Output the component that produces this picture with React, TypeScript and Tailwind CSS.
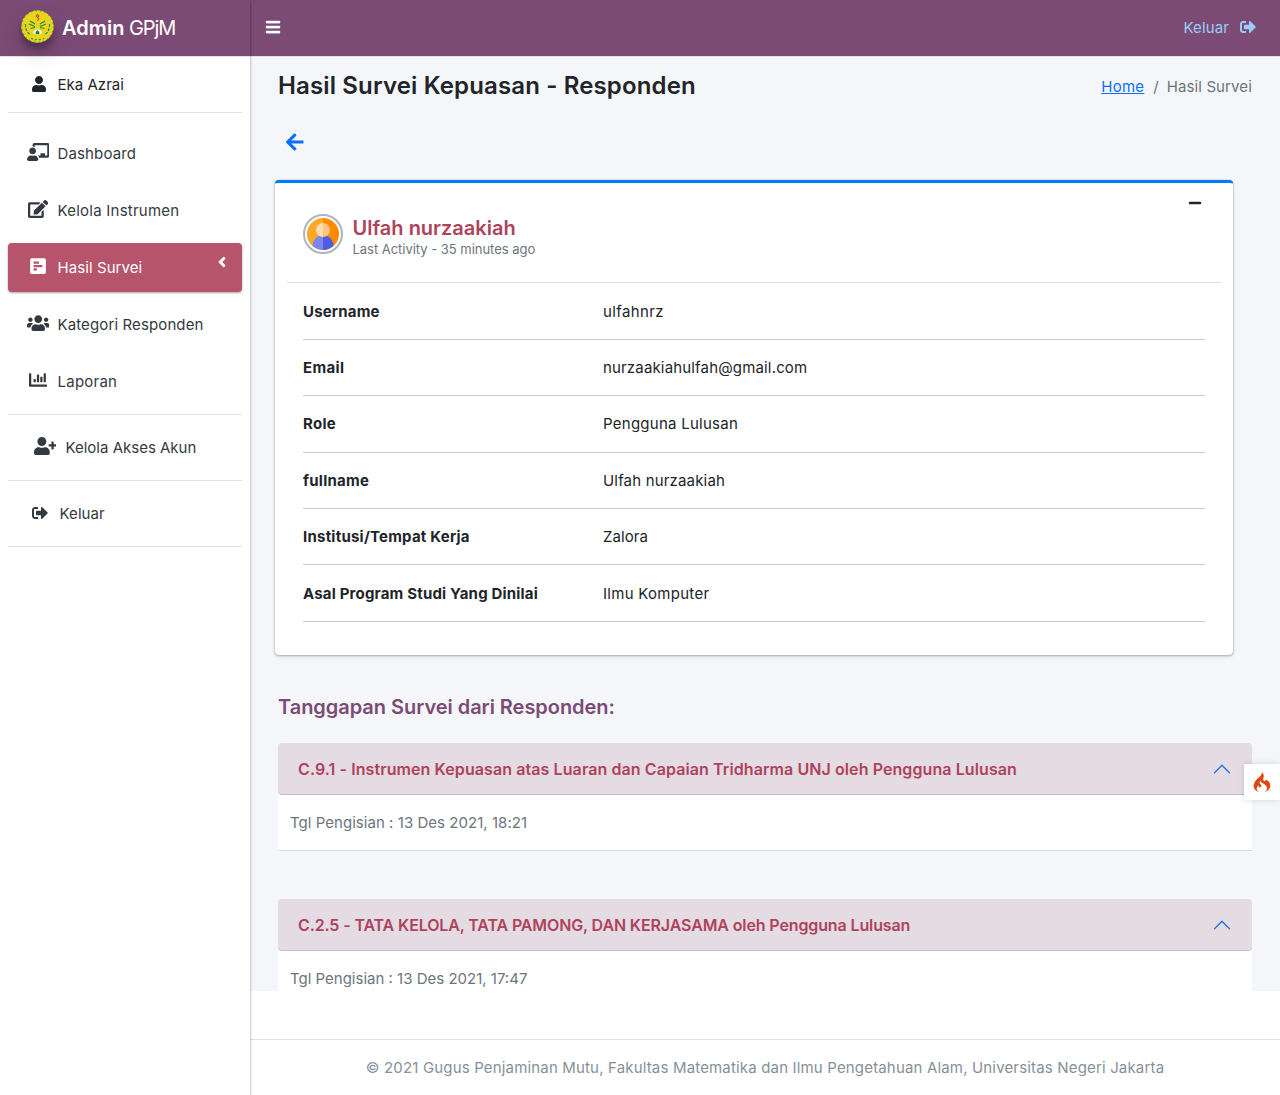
import type { ReactNode } from "react";
import {
  FaAngleLeft,
  FaArrowLeft,
  FaBars,
  FaChalkboardTeacher,
  FaChartBar,
  FaEdit,
  FaMinus,
  FaPollH,
  FaSignOutAlt,
  FaUser,
  FaUserPlus,
  FaUsers,
} from "react-icons/fa";
import { SiCodeigniter } from "react-icons/si";
import { BsChevronUp } from "react-icons/bs";

function Logo() {
  return (
    <svg viewBox="0 0 33 33" className="size-[33px] rounded-full shadow-[0_10px_20px_rgba(0,0,0,0.19),0_6px_6px_rgba(0,0,0,0.23)]">
      <circle cx="16.5" cy="16.5" r="16.3" fill="#e6d51c" />
      <circle cx="16.5" cy="16.5" r="15.8" fill="none" stroke="#2c8a3c" strokeWidth="1" strokeDasharray="1.5 3" />
      <g fill="none" stroke="#1f8a45" strokeWidth="1.2">
        <path d="M9 11l5 3M24 11l-5 3M8 14l6 2.5M25 14l-6 2.5M9.500 18.500l4.500-1M23.500 18.500l-4.500-1" />
        <path d="M4.500 14q-.5 7 5 11M28.500 14q.5 7-5 11" strokeDasharray="3 1.200" />
        <path d="M10 28.500q6.500 2.500 13 0" strokeDasharray="2 2" />
      </g>
      <path d="M12.500 24v-2.500l2-2h4l2 2V24z" fill="#f5f5ea" />
      <path d="M14.700 24v-2.300l1.800-1.500 1.800 1.500V24z" fill="#16804a" />
      <path d="M16.500 4.500l1.300 1.500-1.300 1.500-1.300-1.500zM16.500 7.500l1.300 1.500-1.300 1.800" fill="none" stroke="#dc3b1e" strokeWidth="1.100" />
    </svg>
  );
}

function Avatar() {
  return (
    <div className="size-10 shrink-0 rounded-full border-2 border-[#adb5bd] bg-white p-[2px]">
      <svg viewBox="0 0 32 32" className="size-8">
        <defs>
          <clipPath id="avatar-circle">
            <circle cx="16" cy="16" r="16" />
          </clipPath>
        </defs>
        <g clipPath="url(#avatar-circle)">
          <path d="M0 0h16v32H0z" fill="#ffa726" />
          <path d="M16 0h16v32H16z" fill="#ff8a00" />
          <path d="M16 17.500c-6.500 0-10.500 4.500-10.500 11V32H16z" fill="#7c86ec" />
          <path d="M16 17.500c6.500 0 10.500 4.500 10.500 11V32H16z" fill="#4d5ce6" />
          <path d="M16 5a7 7 0 0 0 0 14z" fill="#ffdcae" />
          <path d="M16 5a7 7 0 0 1 0 14z" fill="#ffc47d" />
        </g>
      </svg>
    </div>
  );
}

type NavRowProps = {
  icon: ReactNode;
  label: string;
  labelClass: string;
  active?: boolean;
};

function NavRow({ icon, label, labelClass, active = false }: NavRowProps) {
  return (
    <a
      className={
        active
          ? "flex h-[49px] items-center rounded bg-[#b5546b] pl-[15px] text-white shadow-[0_1px_3px_rgba(0,0,0,0.12),0_1px_2px_rgba(0,0,0,0.24)]"
          : "flex h-[49px] items-center pl-[15px] text-[#343a40]"
      }
    >
      <span className="-mt-[2.5px] -ml-[0.5px] flex w-[30.5px] justify-center">{icon}</span>
      <span className={labelClass}>{label}</span>
      {active && <FaAngleLeft className="-mt-[11px] mr-[12px] ml-auto size-4 stroke-white" strokeWidth={16} />}
    </a>
  );
}

const details = [
  { name: "Username", nameClass: "tracking-[0.18px]", value: "ulfahnrz", valueClass: "tracking-[0.38px]" },
  { name: "Email", nameClass: "tracking-[0.35px]", value: "nurzaakiahulfah@gmail.com", valueClass: "tracking-[0.16px]" },
  { name: "Role", nameClass: "tracking-[0.3px]", value: "Pengguna Lulusan", valueClass: "tracking-[0.26px]" },
  { name: "fullname", nameClass: "tracking-[0.26px]", value: "Ulfah nurzaakiah", valueClass: "tracking-[0.17px]" },
  { name: "Institusi/Tempat Kerja", nameClass: "tracking-[0.23px]", value: "Zalora", valueClass: "tracking-[0.08px]" },
  { name: "Asal Program Studi Yang Dinilai", nameClass: "tracking-[0.19px]", value: "Ilmu Komputer", valueClass: "tracking-[0.28px]" },
];

const responses = [
  {
    title: "C.9.1 - Instrumen Kepuasan atas Luaran dan Capaian Tridharma UNJ oleh Pengguna Lulusan",
    titleClass: "tracking-[0.09px]",
    date: "Tgl Pengisian : 13 Des 2021, 18:21",
    dateClass: "tracking-[0.04px]",
  },
  {
    title: "C.2.5 - TATA KELOLA, TATA PAMONG, DAN KERJASAMA oleh Pengguna Lulusan",
    titleClass: "tracking-[-0.125px]",
    date: "Tgl Pengisian : 13 Des 2021, 17:47",
    dateClass: "tracking-[0px]",
  },
];

function Sidebar() {
  return (
    <aside className="z-10 flex w-[250px] shrink-0 flex-col bg-white shadow-[0_1px_3px_rgba(0,0,0,0.25),0_1px_2px_rgba(0,0,0,0.22)]">
      <div className="flex h-[57px] shrink-0 items-start border-b border-[#dee2e6] bg-[#7b4b75] pt-[10px] pl-[21px] text-white">
        <Logo />
        <div className="mt-[3px] ml-2 flex text-[20px] leading-[30px]">
          <span className="font-semibold tracking-[0.05px]">Admin</span>
          <span className="ml-[4.5px] tracking-[-1.05px]">GPjM</span>
        </div>
      </div>
      <div className="px-2">
        <div className="flex h-14 items-center border-b border-[#dee2e6] pl-[15px] text-[#212529]">
          <span className="-mt-[2px] flex w-[31px] justify-center pl-px">
            <FaUser className="size-4" />
          </span>
          <span className="ml-[3.5px] tracking-[0.02px]">Eka Azrai</span>
        </div>
        <nav className="mt-4 flex flex-col gap-2">
          <NavRow icon={<FaChalkboardTeacher className="h-[18px] w-[22.5px]" />} label="Dashboard" labelClass="ml-[4.5px] tracking-[0.14px]" />
          <NavRow icon={<FaEdit className="h-[18px] w-[20.250px]" />} label="Kelola Instrumen" labelClass="ml-[4.5px] tracking-[0.24px]" />
          <NavRow active icon={<FaPollH className="h-[18px] w-[16px]" />} label="Hasil Survei" labelClass="ml-[4.5px] tracking-[0.08px]" />
          <NavRow icon={<FaUsers className="h-[18px] w-[22.5px]" />} label="Kategori Responden" labelClass="ml-[4.5px] tracking-[0.12px]" />
          <NavRow icon={<FaChartBar className="size-[18px]" />} label="Laporan" labelClass="ml-[4.5px] tracking-[0.24px]" />
        </nav>
        <div className="mt-2 border-y border-[#dee2e6] py-2 pl-2">
          <NavRow icon={<FaUserPlus className="h-[18px] w-[22.5px] translate-x-[-1px]" />} label="Kelola Akses Akun" labelClass="ml-[4.5px] tracking-[0px]" />
        </div>
        <div className="border-b border-[#dee2e6] py-2 pl-[2px]">
          <NavRow icon={<FaSignOutAlt className="mt-px size-4" />} label="Keluar" labelClass="ml-[4.5px] tracking-[0.08px]" />
        </div>
      </div>
    </aside>
  );
}

export default function App() {
  return (
    <div className="relative flex h-[1095px] w-[1280px] overflow-hidden bg-white font-[Inter,sans-serif] text-[15px] leading-[24px] text-[#212529]">
      <Sidebar />
      <div className="flex min-w-0 flex-1 flex-col">
        <header className="flex h-[57px] shrink-0 items-center justify-between border-b border-[#dee2e6] bg-[#7b4b75] pr-6 pb-px pl-[15px]">
          <FaBars className="mb-px size-4 stroke-white text-white" strokeWidth={12} />
          <a className="flex items-center gap-[11px] text-[#99ccf8]">
            <span className="pt-px tracking-[0.12px]">Keluar</span>
            <FaSignOutAlt className="mb-px size-4" />
          </a>
        </header>

        <main className="h-[934px] shrink-0 overflow-hidden bg-[#f4f6f9] px-7">
          <div className="flex h-[58px] items-center justify-between">
            <h1 className="text-[24px] font-semibold tracking-[0.14px]">Hasil Survei Kepuasan - Responden</h1>
            <div className="flex pt-[2px] text-[#6c757d]">
              <a className="tracking-[0.24px] text-[#0d6efd] underline">Home</a>
              <span className="pr-2 pl-[9px]">/</span>
              <span className="tracking-[0.12px]">Hasil Survei</span>
            </div>
          </div>
          <div className="flex h-[65px] pt-[17px] pl-2">
            <FaArrowLeft className="h-5 w-[17.5px] text-[#0d6efd]" />
          </div>

          <section className="-ml-[3px] h-[474.5px] w-[957.5px] rounded border-t-[3px] border-[#007bff] bg-white px-3 shadow-[0_0_1px_rgba(0,0,0,0.35),0_1px_3px_rgba(0,0,0,0.3)]">
            <div className="flex h-[100.4px] items-start border-b border-[#dfdfdf] pt-[31px] pl-4">
              <Avatar />
              <div className="ml-[9.5px]">
                <h2 className="mt-[2px] text-[20px] leading-6 font-semibold tracking-[0px] text-[#ae435c]">Ulfah nurzaakiah</h2>
                <p className="text-[13px] leading-[19px] tracking-[-0.03px] text-[#6c757d]">Last Activity - 35 minutes ago</p>
              </div>
              <FaMinus className="-mt-[18px] mr-[19px] ml-auto size-[14px]" />
            </div>
            <dl className="mr-4 ml-4">
              {details.map((row) => (
                <div key={row.name} className="flex h-[56.4px] items-center border-b border-[#c6c8ca] pt-px">
                  <dt className="w-[300px] font-bold">
                    <span className={row.nameClass}>{row.name}</span>
                  </dt>
                  <dd className={row.valueClass}>{row.value}</dd>
                </div>
              ))}
            </dl>
          </section>

          <h2 className="mt-[36.5px] text-[20px] leading-8 font-semibold tracking-[-0.04px] text-[#7b4b75]">Tanggapan Survei dari Responden:</h2>
          <div className="mt-5 flex flex-col gap-12">
            {responses.map((item) => (
              <article key={item.title} className="h-[108px] rounded-t border-b border-[#dcdee0] bg-white">
                <div className="flex h-[52px] items-center justify-between rounded border-b border-[#c5bcc5] bg-[#e5dbe3] pr-5 pl-5">
                  <h3 className="text-[16px] font-semibold whitespace-nowrap text-[#ae435c]">
                    <span className={item.titleClass}>{item.title}</span>
                  </h3>
                  <BsChevronUp className="size-5 shrink-0 text-[#1e6fe8]" />
                </div>
                <p className="px-3 py-4 text-[#6c757d]">
                  <span className={item.dateClass}>{item.date}</span>
                </p>
              </article>
            ))}
          </div>
        </main>

        <footer className="mt-12 flex h-14 items-center justify-center border-t border-[#dee2e6] tracking-[0.165px] whitespace-nowrap text-[#869099]">
          © 2021 Gugus Penjaminan Mutu, Fakultas Matematika dan Ilmu Pengetahuan Alam, Universitas Negeri Jakarta
        </footer>
      </div>

      <div className="absolute top-[764px] right-0 z-20 flex size-9 items-center justify-center bg-white shadow-[0_0_6px_rgba(0,0,0,0.14)]">
        <SiCodeigniter className="size-5 text-[#dd4814]" />
      </div>
    </div>
  );
}
